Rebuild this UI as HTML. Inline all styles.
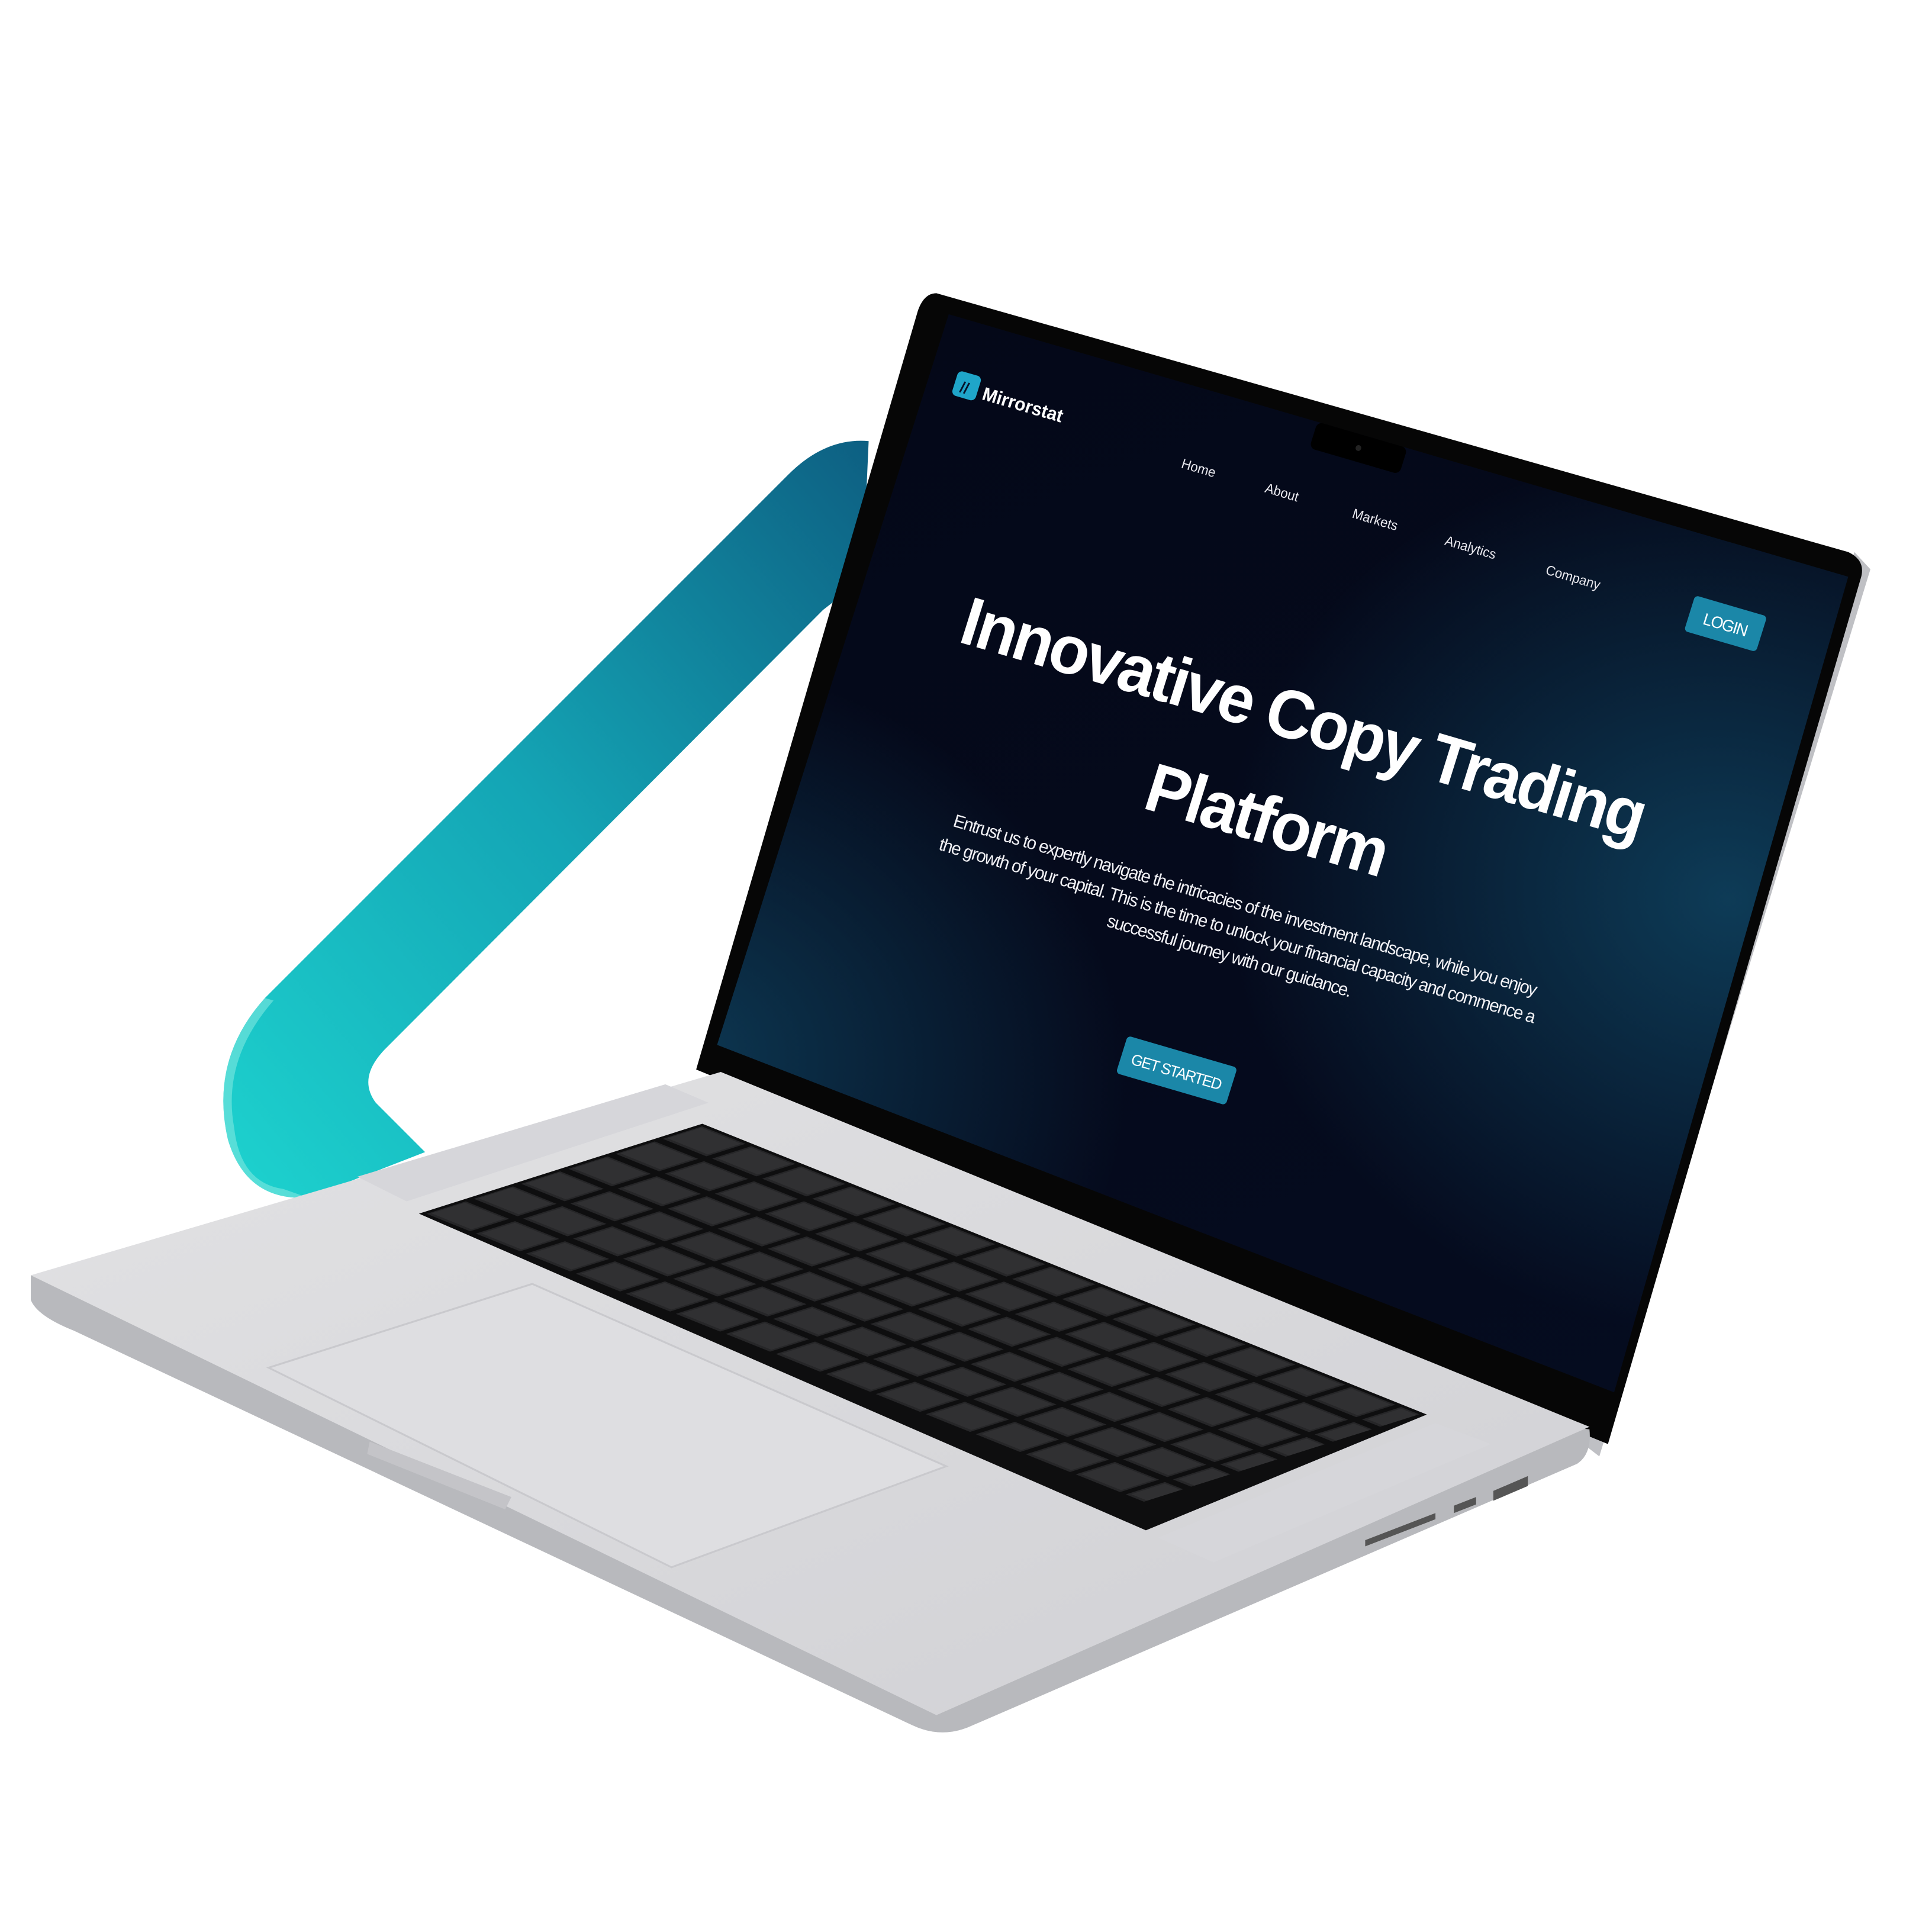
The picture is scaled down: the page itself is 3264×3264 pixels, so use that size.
<!DOCTYPE html>
<html><head><meta charset="utf-8"><style>
html,body{margin:0;padding:0;background:#fff;}
svg{display:block}
</style></head><body>
<svg width="3264" height="3264" viewBox="0 0 1568 1568" xmlns="http://www.w3.org/2000/svg">
<defs>
<linearGradient id="ring" x1="0" y1="1" x2="1" y2="0">
<stop offset="0" stop-color="#1dd3cf"/><stop offset="0.5" stop-color="#14a5b5"/><stop offset="1" stop-color="#0d5f82"/>
</linearGradient>
<linearGradient id="scr" x1="0" y1="0" x2="1" y2="1">
<stop offset="0" stop-color="#040818"/><stop offset="0.5" stop-color="#050a1c"/><stop offset="1" stop-color="#050c20"/>
</linearGradient>
<radialGradient id="glow1" cx="0.9" cy="0.35" r="0.45">
<stop offset="0" stop-color="#0e3e5a" stop-opacity="0.95"/><stop offset="1" stop-color="#0e3e5a" stop-opacity="0"/>
</radialGradient>
<radialGradient id="glow2" cx="0.05" cy="0.8" r="0.4">
<stop offset="0" stop-color="#0d3a55" stop-opacity="0.95"/><stop offset="1" stop-color="#0d3a55" stop-opacity="0"/>
</radialGradient>
<linearGradient id="base" x1="0" y1="0" x2="1" y2="1">
<stop offset="0" stop-color="#e2e2e4"/><stop offset="1" stop-color="#d0d0d4"/>
</linearGradient>
<pattern id="keys" patternUnits="userSpaceOnUse" width="0.0690" height="0.1667">
<rect x="0.004" y="0.014" width="0.061" height="0.138" fill="#262628"/>
<rect x="0.007" y="0.022" width="0.055" height="0.118" fill="#303032"/>
</pattern>
<clipPath id="scrclip"><polygon points="770,255 1500,468 1310,1130 582,848"/></clipPath>
</defs>

<!-- teal ring -->
<path d="M705,358 Q670,355 640,385 L215,810 Q170,860 185,925 Q200,975 250,972 L345,935 L305,895 Q290,875 312,852 L668,495 L700,470 Z" fill="url(#ring)"/>
<path d="M215,810 Q170,860 185,925 Q200,975 250,972 L230,965 Q195,960 190,915 Q180,860 222,812 Z" fill="#7ee8e0" opacity="0.6"/>

<!-- lid silver edge -->
<polygon points="1505,448 1518,462 1298,1182 1285,1172" fill="#bfc0c4"/>
<!-- bezel -->
<path d="M760,238 L1500,448 Q1515,455 1510,470 L1305,1172 L565,868 L745,252 Q750,238 760,238 Z" fill="#060606"/>

<!-- screen bg -->
<g clip-path="url(#scrclip)">
<g transform="matrix(0.73,0.213,-0.2375,0.76,770,255)">
<rect x="-100" y="0" width="1200" height="1000" fill="url(#scr)"/>
<rect x="-100" y="0" width="1200" height="1000" fill="url(#glow1)"/>
<rect x="-100" y="0" width="1200" height="1000" fill="url(#glow2)"/>
</g>
</g>
<g transform="matrix(0.73,0.213,-0.2375,0.76,770,255)">
<rect x="410" y="0" width="100" height="28" rx="6" fill="#000"/>
<circle cx="460" cy="14" r="3" fill="#222"/>
<rect x="28" y="52" width="26" height="26" rx="5" fill="#1fa5c9"/>
<text x="35" y="73" font-family="Liberation Sans,sans-serif" font-weight="bold" font-size="16" fill="#06122a">//</text>
<text x="60" y="74" font-family="Liberation Sans,sans-serif" font-weight="bold" font-size="19" fill="#fff">Mirrorstat</text>
<g font-family="Liberation Sans,sans-serif" font-size="14" fill="#e8e8ee">
<text x="285" y="84">Home</text>
<text x="378" y="84">About</text>
<text x="475" y="84">Markets</text>
<text x="578" y="84">Analytics</text>
<text x="690" y="84">Company</text>
</g>
<rect x="850" y="62" width="80" height="38" rx="4" fill="#1b87a8"/>
<text x="890" y="88" text-anchor="middle" font-family="Liberation Sans,sans-serif" font-size="17" fill="#fff" letter-spacing="-1">LOGIN</text>
<g font-family="Liberation Sans,sans-serif" font-weight="bold" fill="#fff" text-anchor="middle">
<text x="490" y="318" font-size="70" letter-spacing="-2.5">Innovative Copy Trading</text>
<text x="485" y="428" font-size="70" letter-spacing="-2.5">Platform</text>
</g>
<g font-family="Liberation Sans,sans-serif" font-size="18.5" fill="#f0f0f4" text-anchor="middle" letter-spacing="-1">
<text x="490" y="500">Entrust us to expertly navigate the intricacies of the investment landscape, while you enjoy</text>
<text x="490" y="527">the growth of your capital. This is the time to unlock your financial capacity and commence a</text>
<text x="490" y="554">successful journey with our guidance.</text>
</g>
<rect x="412" y="655" width="122" height="40" rx="4" fill="#1b87a8"/>
<text x="473" y="682" text-anchor="middle" font-family="Liberation Sans,sans-serif" font-size="16" fill="#fff" letter-spacing="-1">GET STARTED</text>
</g>

<!-- base bottom -->
<path d="M25,1035 L25,1055 Q30,1068 60,1080 L740,1400 Q765,1412 790,1400 L1280,1188 Q1292,1180 1290,1160 Z" fill="#b8b9bd"/>
<!-- base top -->
<polygon points="25,1035 585,870 1290,1158 760,1392" fill="url(#base)"/>
<!-- speaker grilles -->
<polygon points="290,955 540,880 575,895 330,975" fill="#d6d6da"/>
<polygon points="940,1248 1165,1155 1210,1172 985,1268" fill="#d6d6da"/>
<!-- keyboard -->
<polygon points="340,985 570,912 1158,1148 930,1242" fill="#0e0e0f"/>
<g transform="matrix(588,236,-230,73,570,912)">
<rect x="0.005" y="0.01" width="0.99" height="0.98" fill="url(#keys)"/>
</g>
<!-- trackpad -->
<polygon points="218,1110 432,1042 768,1190 545,1272" fill="#dedee1" stroke="#c9c9cd" stroke-width="1.5"/>
<!-- front notch -->
<polygon points="300,1170 415,1215 410,1225 298,1180" fill="#c4c4c8"/>
<!-- ports -->
<polygon points="1108,1250 1165,1228 1165,1233 1108,1255" fill="#555"/>
<polygon points="1180,1222 1198,1215 1198,1221 1180,1228" fill="#555"/>
<polygon points="1212,1210 1240,1198 1240,1206 1212,1218" fill="#555"/>
</svg>
</body></html>
